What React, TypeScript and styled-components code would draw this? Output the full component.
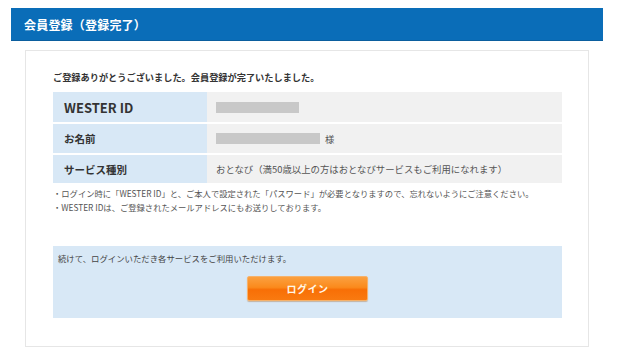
import React from "react";
import styled, { createGlobalStyle } from "styled-components";

const Global = createGlobalStyle`
  html, body { margin: 0; padding: 0; background: #ffffff; }
  body { font-family: "Noto Sans CJK JP", "Noto Sans", sans-serif; color: #333; }
`;

const Page = styled.div`
  width: 620px;
  height: 360px;
  padding-top: 8px;
  box-sizing: border-box;
`;

const Header = styled.div`
  margin-left: 11px;
  width: 592px;
  height: 33px;
  background: #0a6db8;
  border-bottom: 1px solid #0b5e9e;
  box-sizing: border-box;
  display: flex;
  align-items: center;
  padding-left: 13px;
  color: #fff;
  font-weight: 700;
  font-size: 12px;
  letter-spacing: 0.2px;
`;

const Card = styled.div`
  margin: 9px 0 0 25px;
  width: 564px;
  height: 297px;
  border: 1px solid #e6e6e6;
  box-sizing: border-box;
  padding: 19px 26px 0 27px;
`;

const Lead = styled.div`
  font-size: 9.2px;
  font-weight: 700;
  line-height: 14px;
  color: #333;
`;

const Table = styled.div`
  margin-top: 8px;
  display: flex;
  flex-direction: column;
  gap: 2px;
`;

const Row = styled.div<{ $h: number }>`
  display: grid;
  grid-template-columns: 154px 1fr;
  height: ${(p) => p.$h}px;
`;

const Label = styled.div<{ $big?: boolean }>`
  background: #d8e8f6;
  display: flex;
  align-items: center;
  padding-left: 11px;
  font-weight: 700;
  font-size: ${(p) => (p.$big ? "13px" : "10.5px")};
  color: #333;
`;

const Value = styled.div`
  background: #f1f1f1;
  display: flex;
  align-items: center;
  padding-left: 9px;
  font-size: 9.4px;
  color: #555;
  gap: 5px;
`;

const Mask = styled.div<{ $w: number; $h: number }>`
  width: ${(p) => p.$w}px;
  height: ${(p) => p.$h}px;
  background: #c8c8c8;
`;

const Notes = styled.div`
  margin-top: 3px;
  font-size: 8.3px;
  line-height: 14px;
  color: #555;
`;

const Continue = styled.div`
  margin-top: 32px;
  height: 72px;
  background: #d8e8f6;
  padding: 6px 0 0 5px;
  box-sizing: border-box;
`;

const ContinueText = styled.div`
  font-size: 8.4px;
  line-height: 13px;
  color: #444;
`;

const ButtonRow = styled.div`
  display: flex;
  margin-top: 11px;
  padding-left: 189px;
`;

const LoginButton = styled.button`
  width: 121px;
  height: 25px;
  border: 1px solid #f6b26b;
  border-radius: 2px;
  background: linear-gradient(#fba040 0%, #fb8a1c 45%, #f86f06 55%, #f97a10 100%);
  color: #fff6e8;
  font-family: "Noto Sans CJK JP", sans-serif;
  font-weight: 700;
  font-size: 10px;
  letter-spacing: 0.5px;
  box-shadow: 0 1px 1px rgba(160, 80, 0, 0.35);
  padding: 0;
`;

export default function App() {
  return (
    <Page>
      <Global />
      <Header>会員登録（登録完了）</Header>
      <Card>
        <Lead>ご登録ありがとうございました。会員登録が完了いたしました。</Lead>
        <Table>
          <Row $h={30}>
            <Label $big>WESTER ID</Label>
            <Value>
              <Mask $w={83} $h={11} />
            </Value>
          </Row>
          <Row $h={29}>
            <Label>お名前</Label>
            <Value>
              <Mask $w={104} $h={11} />
              <span>様</span>
            </Value>
          </Row>
          <Row $h={28}>
            <Label>サービス種別</Label>
            <Value>おとなび（満50歳以上の方はおとなびサービスもご利用になれます）</Value>
          </Row>
        </Table>
        <Notes>
          <div>・ログイン時に「WESTER ID」と、ご本人で設定された「パスワード」が必要となりますので、忘れないようにご注意ください。</div>
          <div>・WESTER IDは、ご登録されたメールアドレスにもお送りしております。</div>
        </Notes>
        <Continue>
          <ContinueText>続けて、ログインいただき各サービスをご利用いただけます。</ContinueText>
          <ButtonRow>
            <LoginButton>ログイン</LoginButton>
          </ButtonRow>
        </Continue>
      </Card>
    </Page>
  );
}
